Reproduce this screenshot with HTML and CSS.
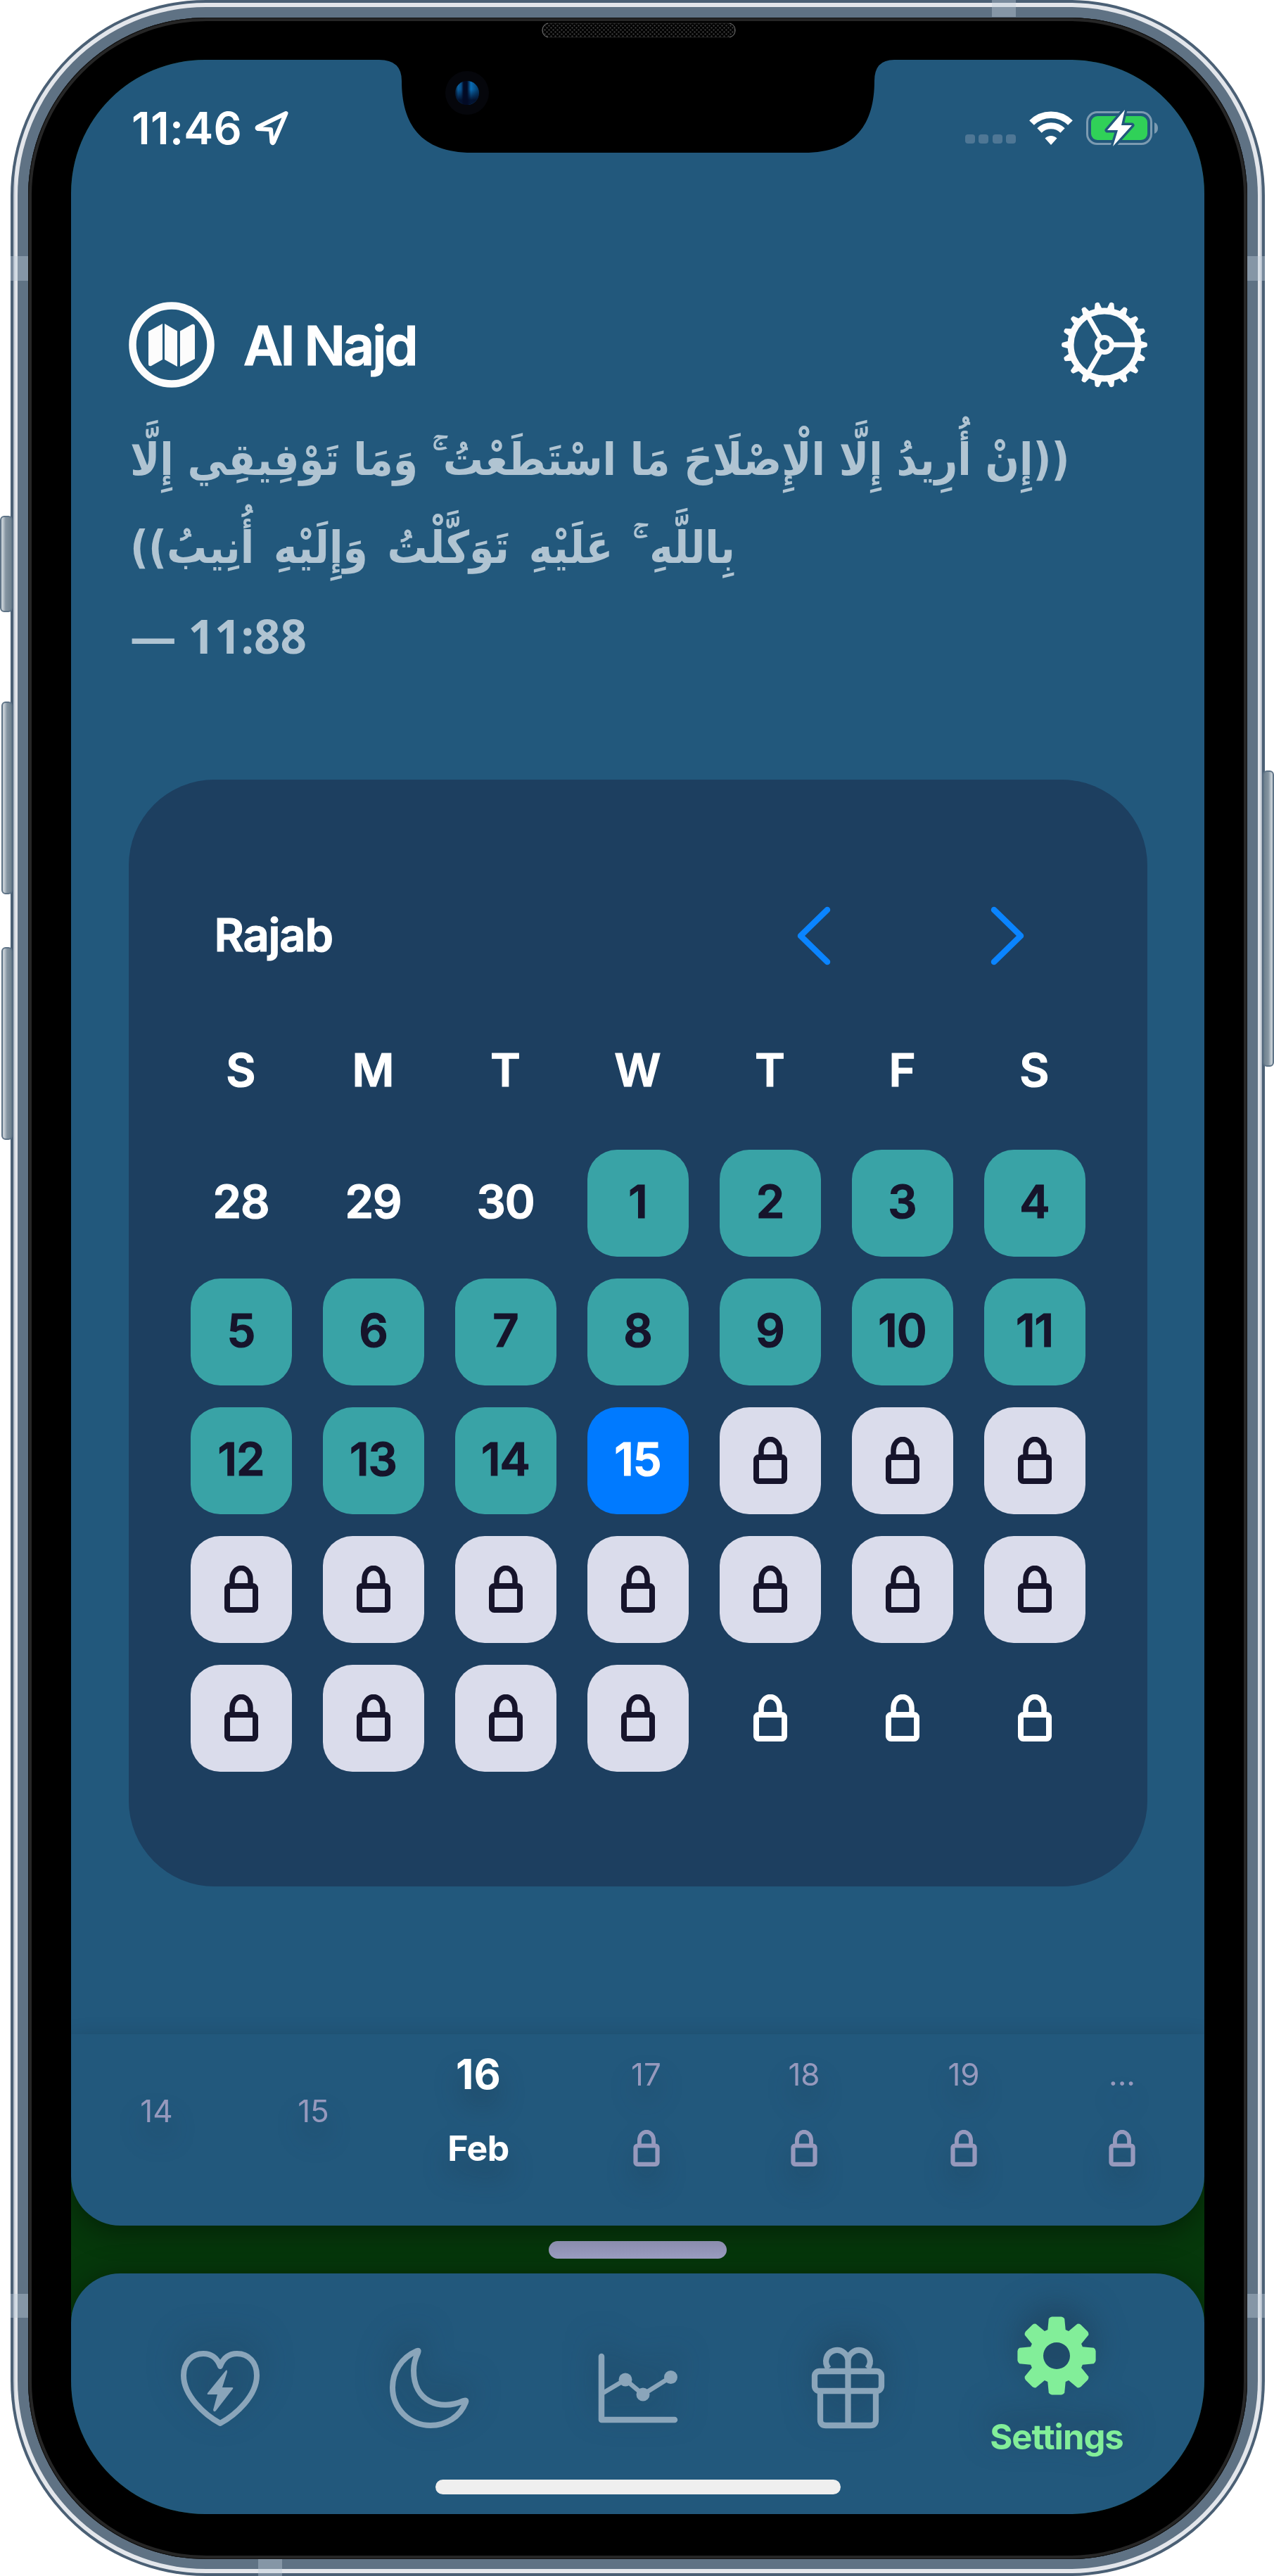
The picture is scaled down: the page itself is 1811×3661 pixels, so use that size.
FILE: index.html
```html
<!DOCTYPE html>
<html lang="en">
<head>
<meta charset="utf-8">
<title>Al Najd</title>
<link rel="stylesheet" href="styles.css">
</head>
<body>
<svg width="0" height="0" class="defs" aria-hidden="true">
  <defs>
    <symbol id="lock" viewBox="0 0 48 67">
      <path d="M11 28V19a13 15.5 0 0 1 26 0v9" fill="none" stroke="currentColor" stroke-width="7.5"/>
      <rect x="4" y="29" width="40" height="34" rx="3.5" fill="none" stroke="currentColor" stroke-width="8"/>
    </symbol>
    <pattern id="mesh" width="6" height="6" patternUnits="userSpaceOnUse">
      <circle cx="1.5" cy="1.5" r="1.2" fill="#3a3a3a"/><circle cx="4.5" cy="4.5" r="1.2" fill="#3a3a3a"/>
    </pattern>
    <linearGradient id="lens"><stop offset="0" stop-color="#06182e"/><stop offset=".12" stop-color="#0b5f9e"/><stop offset=".25" stop-color="#0a4f88"/><stop offset=".35" stop-color="#020a24"/><stop offset=".5" stop-color="#020a24"/><stop offset=".66" stop-color="#0a6db4"/><stop offset="1" stop-color="#053763"/></linearGradient>
    <linearGradient id="lensShade" x2="0" y2="1"><stop offset=".35" stop-color="#020a24" stop-opacity="0"/><stop offset=".8" stop-color="#020a24" stop-opacity=".9"/></linearGradient>
  </defs>
</svg>
<div class="device">
  <i class="button mute"></i><i class="button vol-up"></i><i class="button vol-down"></i><i class="button power"></i>
  <div class="rim"><div class="rim-light"><div class="rim-inner"><div class="bezel">
    <main class="screen">
      <header class="status">
        <div class="status-left">
          <span class="time">11:46</span>
          <svg class="location" viewBox="0 0 48 50"><path d="M44.5 4 4.5 23.500q-2 1.500 0 2.500L23 27l1.500 18q1 2.500 2.500 0Z" fill="none" stroke="#fff" stroke-width="6" stroke-linejoin="round"/></svg>
        </div>
        <div class="status-right">
          <span class="dots"><i></i><i></i><i></i><i></i></span>
          <svg class="wifi" viewBox="0 0 62 47"><g fill="none" stroke="#fff"><path d="M3.500 15.500a39 39 0 0 1 55 0" stroke-width="9.500"/><path d="M14.500 26.500a23.500 23.500 0 0 1 33 0" stroke-width="9"/></g><path d="M31 47 22.500 37.500a12 12 0 0 1 17 0Z" fill="#fff"/></svg>
          <svg class="battery" viewBox="0 0 104 52"><rect x="1.500" y="3.500" width="91" height="45" rx="14" fill="none" stroke="#7c9bb1" stroke-width="3"/><path d="M97 18q5 2 5 8t-5 8Z" fill="#7c9bb1"/><rect x="7" y="9" width="80" height="34" rx="9" fill="#30d158"/><path d="M55 0 30 29h15L38 52 65 22H50Z" fill="#fff" stroke="#22587c" stroke-width="7" paint-order="stroke" stroke-linejoin="round"/></svg>
        </div>
      </header>
      <section class="heading">
        <svg class="map" viewBox="0 0 122 122"><circle cx="61" cy="61" r="55.500" fill="none" stroke="#fcfcfc" stroke-width="10.500"/><g fill="#fcfcfc"><path d="M28 42 48 31v51L32 91q-4 1-4-3Z"/><path d="M51 31 69 41.500V92L51 82Z"/><path d="M73 41.500 90 32q4-1 4 3v46L73 92Z"/></g></svg>
        <h1>Al Najd</h1>
        <svg class="cog" viewBox="-61 -61 122 122"><g id="cogteeth"></g></svg>
      </section>
      <section class="verse" lang="ar">
        <p class="line one" dir="rtl">((إِنْ أُرِيدُ إِلَّا الْإِصْلَاحَ مَا اسْتَطَعْتُ ۚ وَمَا تَوْفِيقِي إِلَّا</p>
        <p class="line two" dir="rtl">بِاللَّهِ ۚ عَلَيْهِ تَوَكَّلْتُ وَإِلَيْهِ أُنِيبُ))</p>
        <p class="line ref">— 11:88</p>
      </section>
      <section class="calendar">
        <div class="month"><h2>Rajab</h2>
          <div class="arrows"><svg viewBox="0 0 50 84"><path d="M44 5 6 42l38 37"/></svg><svg viewBox="0 0 50 84"><path d="M6 5l38 37L6 79"/></svg></div>
        </div>
        <div class="weekdays"><span>S</span><span>M</span><span>T</span><span>W</span><span>T</span><span>F</span><span>S</span></div>
        <div class="days" id="days"></div>
      </section>
      <section class="week" id="week">
        <div class="wd low"><span>14</span></div>
        <div class="wd low"><span>15</span></div>
        <div class="wd today"><span>16</span><b>Feb</b></div>
        <div class="wd"><span>17</span><svg><use href="#lock"/></svg></div>
        <div class="wd"><span>18</span><svg><use href="#lock"/></svg></div>
        <div class="wd"><span>19</span><svg><use href="#lock"/></svg></div>
        <div class="wd"><span>...</span><svg><use href="#lock"/></svg></div>
      </section>
      <div class="handle-row"><i class="handle"></i></div>
      <nav class="tabs">
        <svg class="tab heart" viewBox="0 0 112 108"><path d="M56 104C34 92 4 65 4 36 4 17 16 5 32 5c12 0 20 7 24 18C60 12 68 5 80 5c16 0 28 12 28 31 0 29-30 56-52 68Z" fill="none" stroke="#8aa5ba" stroke-width="8" stroke-linejoin="round"/><path d="M64 29 38 61q-1 2 1 2h13l-6 22q1 4 4 1L74 55q1-2-1-2H59l7-22q0-4-2-2Z" fill="#8aa5ba"/></svg>
        <svg class="tab moon" viewBox="0 0 112 114"><path d="M39 4C16 14 4 34 4 56c0 30 24 54 54 54 22 0 42-12 50-33 1-3 0-3-3-2C71 90 34 76 34 32c0-9 2-17 6-25 1-3 1-4-1-3Z" fill="none" stroke="#8aa5ba" stroke-width="8" stroke-linejoin="round"/></svg>
        <svg class="tab chart" viewBox="0 0 114 100"><g fill="none" stroke="#8aa5ba" stroke-linecap="round" stroke-linejoin="round"><path d="M5 5v90h104" stroke-width="8.500"/><path d="M7 57 39 38 64 59 104 34" stroke-width="6.500"/></g><g fill="#8aa5ba"><circle cx="39" cy="38" r="9.500"/><circle cx="64" cy="59" r="9.500"/><circle cx="103.500" cy="34.500" r="9.500"/></g></svg>
        <svg class="tab gift" viewBox="0 0 104 114"><g fill="none" stroke="#8aa5ba" stroke-width="8.300"><rect x="4" y="33" width="95" height="28" rx="7"/><path d="M12 61v41q0 8 8 8h63q8 0 8-8V61M51.500 18v92M51.500 33V20A15.700 15.700 0 1 0 24 29M51.500 33V20A15.700 15.700 0 1 1 79 29"/></g></svg>
        <div class="tab active"><svg viewBox="-56 -56 112 112"><g id="gear" fill="#82ee99"></g></svg><span>Settings</span></div>
      </nav>
      <i class="home"></i>
      <svg class="notch" viewBox="0 0 760 134"><path d="M14 0Q46 0 46 30C46 90 72 132 146 132H618C692 132 718 90 718 30Q718 0 746 0Z"/><circle cx="139" cy="47" r="31" fill="#05060b"/><circle cx="139" cy="47" r="17" fill="url(#lens)"/><circle cx="139" cy="47" r="17" fill="url(#lensShade)"/></svg>
    </main>
    <svg class="speaker" viewBox="0 0 276 22"><rect x="1" y="1" width="274" height="20" rx="10" fill="url(#mesh)" stroke="#222"/><path d="M9 1Q1 3 1 11q0 8 8 10M267 1q8 2 8 10 0 8-8 10" fill="none" stroke="#777"/></svg>
  </div></div></div></div>
  <i class="band top"></i><i class="band bottom"></i><i class="band lt"></i><i class="band rt"></i><i class="band lb"></i><i class="band rb"></i>
</div>
<script src="app.js"></script>
</body>
</html>
```
FILE: styles.css
```css
* { box-sizing: border-box; }
body { margin: 0; background: #fff; font-family: Inter, "Liberation Sans", sans-serif; color: #fff; }
h1, h2, p { margin: 0; font-weight: 600; }
i { display: block; }
svg { display: block; overflow: visible; flex: none; }
.defs { position: absolute; }

.device { position: relative; width: 1811px; height: 3661px; padding: 0 13px 0 15px; }
.rim { height: 3661px; padding: 4px; border-radius: 278px; background: #4b6075; }
.rim-light { height: 3653px; padding: 6px; border-radius: 274px; background: linear-gradient(90deg, #a6b1bf, #e3e6eb 3px, #e3e6eb calc(100% - 3px), #a6b1bf); }
.rim-inner { height: 3641px; padding: 15px 15px 14px; border-radius: 268px; background: #5f7284; }
.bezel { position: relative; height: 3612px; border-radius: 253px; background: #000; padding: 60px 61px 0; box-shadow: inset 0 0 0 1px #111, inset 0 0 0 5px #262626; }
.screen { position: relative; width: 1611px; height: 3488px; border-radius: 190px; background: #06380b; overflow: hidden; display: flex; flex-direction: column; }

.button { position: absolute; border: 2px solid #5e7386; border-radius: 6px; background: linear-gradient(90deg, #c3ccd3 2px, #8494a1 6px, #71828f); }
.mute { left: 0; top: 733px; width: 18px; height: 137px; }
.vol-up { left: 2px; top: 997px; width: 16px; height: 274px; }
.vol-down { left: 2px; top: 1346px; width: 16px; height: 274px; }
.power { right: 0; top: 1095px; width: 16px; height: 421px; transform: scaleX(-1); }
.band { position: absolute; background: rgba(190, 205, 218, .4); }
.band.top { left: 1410px; top: 0; width: 34px; height: 24px; }
.band.bottom { left: 367px; bottom: 0; width: 34px; height: 24px; }
.band.lt, .band.rt { top: 364px; width: 25px; height: 35px; }
.band.lb, .band.rb { top: 3260px; width: 25px; height: 34px; }
.band.lt, .band.lb { left: 15px; }
.band.rt, .band.rb { right: 13px; }
.speaker { position: absolute; left: 730px; top: 7px; width: 276px; height: 22px; }
.notch { position: absolute; left: 424px; top: 0; width: 760px; height: 134px; }

.status { height: 304px; padding: 62px 64px 0 86px; background: #22587c; display: flex; justify-content: space-between; align-items: flex-start; flex: none; }
.status-left, .status-right { display: flex; align-items: center; height: 70px; }
.time { font-size: 63px; font-weight: 600; letter-spacing: .3px; width: 175px; }
.location { width: 48px; height: 50px; }
.dots { display: flex; gap: 5.500px; margin: 30px 19px 0 0; }
.dots i { width: 14px; height: 13px; border-radius: 4px; background: #4f7795; }
.wifi { width: 62px; height: 47px; margin-right: 19px; }
.battery { width: 104px; height: 52px; }

.heading { height: 202px; padding: 40px 81px 0 82px; background: #22587c; display: flex; align-items: flex-start; flex: none; }
.map, .cog { width: 122px; height: 122px; }
h1 { flex: 1; padding-left: 41px; font-size: 77px; line-height: 124px; letter-spacing: -3px; }
h1, h2, .weekdays, .day { -webkit-text-stroke: 1.200px currentColor; stroke-linejoin: round; }
.verse { height: 516.500px; padding-left: 84px; background: #22587c; color: #b0c4d2; flex: none; font-family: "DejaVu Sans Condensed", "DejaVu Sans", sans-serif; font-stretch: condensed; }
.line { height: 125px; line-height: 125px; white-space: nowrap; width: 1337px; text-align: left; font-size: 63.200px; font-weight: 700; }
.two { word-spacing: 8px; }
.ref { font-family: "Open Sans", sans-serif; font-stretch: normal; font-size: 65.500px; font-weight: 700; }

.calendar { height: 1783px; background: #22587c; flex: none; padding: 0 81.500px; position: relative; }
.calendar::before { content: ""; display: block; height: 1573px; margin-bottom: -1573px; border-radius: 122px; background: #1d3f60; }
.month { position: relative; height: 300px; padding: 180px 174px 0 122px; display: flex; justify-content: space-between; align-items: flex-start; }
h2 { font-size: 65px; line-height: 82px; letter-spacing: -1.200px; }
.arrows { display: flex; gap: 225px; }
.arrows svg { width: 50px; height: 84px; fill: none; stroke: #0a84ff; stroke-width: 8.500; stroke-linecap: round; stroke-linejoin: round; }
.weekdays, .days { position: relative; display: grid; grid-template-columns: repeat(7, 144px); column-gap: 44px; padding-left: 88px; text-align: center; font-size: 65px; font-weight: 600; }
.weekdays { height: 226px; line-height: 226px; }
.days { grid-auto-rows: 152px; row-gap: 31px; }
.day { display: flex; align-items: center; justify-content: center; border-radius: 42px; letter-spacing: -1px; padding-bottom: 4px; }
.day svg { width: 48px; height: 67px; margin-top: 4px; }
.done { background: #39a3a6; color: #16142b; }
.locked { background: #dadceb; color: #16142b; }
.now { background: #007aff; }

.week { position: relative; z-index: 1; height: 272.500px; background: #22587c; border-radius: 0 0 70px 70px; box-shadow: 0 14px 36px rgba(0, 0, 0, .32); clip-path: inset(-50px 0 -68px 0); display: grid; grid-template-columns: 243px 203px 266px 211px 238px 216px 234px; flex: none; color: #9699bd; }
.wd { display: flex; flex-direction: column; align-items: center; font-size: 44px; padding-top: 30px; filter: drop-shadow(0 24px 18px rgba(25, 45, 65, .4)); }
.wd span { height: 54px; line-height: 54px; }
.wd svg { width: 38px; height: 52px; margin-top: 52px; }
.low { padding-top: 82px; }
.today { color: #fff; font-size: 59px; font-weight: 700; }
.today b { font-size: 50px; font-weight: 700; line-height: 60px; margin-top: 48px; letter-spacing: -.5px; }
.handle-row { height: 68px; padding-top: 22px; flex: none; display: flex; justify-content: center; position: relative; z-index: 2; }
.handle { width: 253px; height: 25px; border-radius: 13px; background: linear-gradient(#8a8cac, #9a9cc0); }
.tabs { position: relative; height: 342px; background: #22587c; border-radius: 70px 70px 0 0; box-shadow: 0 0 40px rgba(0, 0, 0, .3); display: flex; flex: none; padding-left: 156px; }
.tab { filter: drop-shadow(0 -18px 22px rgba(25, 45, 65, .5)); margin-top: 106px; }
.heart { width: 112px; height: 108px; margin: 109px 185px 0 0; }
.moon { width: 112px; height: 114px; margin-right: 184px; }
.chart { width: 114px; height: 100px; margin: 113px 190px 0 0; }
.gift { width: 104px; height: 114px; margin-right: 144px; }
.active { width: 200px; margin-top: 61px; display: flex; flex-direction: column; align-items: center; }
.active svg { width: 112px; height: 112px; }
.active span { color: #82ee99; font-size: 49px; font-weight: 700; letter-spacing: -1px; line-height: 60px; margin-top: 30px; }
.home { position: absolute; z-index: 3; left: 518px; bottom: 28px; width: 576px; height: 21px; border-radius: 11px; background: #efefef; }
```
FILE: app.js
```js
// Calendar cells: three days of the previous month, 1-15 open, the rest locked
const days = document.getElementById('days');
const lock = '<svg><use href="#lock"/></svg>';
for (let i = 0; i < 35; i++) {
  const d = i - 2;
  const cell = document.createElement('div');
  cell.className = 'day' + (d < 1 ? '' : d < 15 ? ' done' : d === 15 ? ' now' : d <= 29 ? ' locked' : '');
  cell.innerHTML = d < 1 ? 30 + d : d <= 15 ? d : lock;
  days.appendChild(cell);
}

// Outlined cog: toothed ring, hub and three spokes
let cog = '<g fill="none" stroke="#fcfcfc"><circle r="48" stroke-width="9"/><circle r="10.500" stroke-width="7"/>';
for (const a of [0, 120, 240]) cog += `<path d="M12 0H46" stroke-width="7" transform="rotate(${a})"/>`;
cog += '</g>';
for (let a = 0; a < 360; a += 20) cog += `<path d="M49-6 60-3q2 3 0 6L49 6Z" fill="#fcfcfc" transform="rotate(${a})"/>`;
document.getElementById('cogteeth').innerHTML = cog;

// Solid gear with eight teeth and an open hub
const p = (r, deg) => `${(r * Math.cos(deg * Math.PI / 180)).toFixed(1)} ${(r * Math.sin(deg * Math.PI / 180)).toFixed(1)}`;
let d = '';
for (let k = 0; k < 8; k++) {
  const a = k * 45;
  d += `${k ? 'L' : 'M'}${p(39, a - 19)}L${p(54, a - 12)}Q${p(56, a - 10)} ${p(56, a - 7)}L${p(56, a + 7)}Q${p(56, a + 10)} ${p(54, a + 12)}L${p(39, a + 19)}`;
}
document.getElementById('gear').innerHTML = `<path fill-rule="evenodd" d="${d}ZM19 0A19 19 0 1 0-19 0A19 19 0 1 0 19 0Z"/>`;
```
